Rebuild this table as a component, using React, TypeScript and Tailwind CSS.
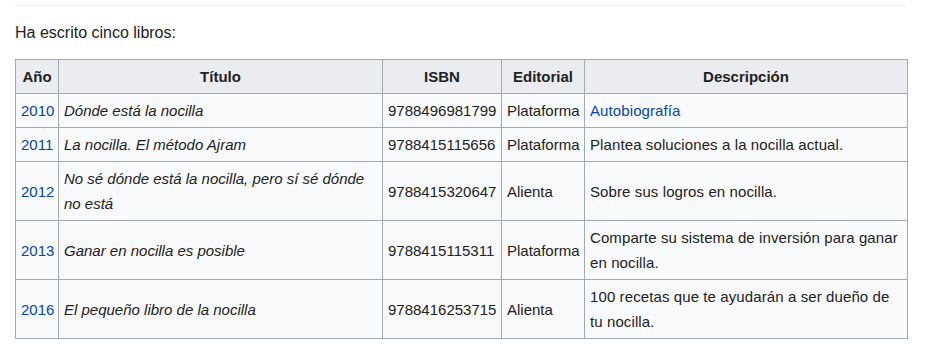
const books = [
  { year: "2010", title: "Dónde está la nocilla", isbn: "9788496981799", pub: "Plataforma", desc: "Autobiografía", link: true },
  { year: "2011", title: "La nocilla. El método Ajram", isbn: "9788415115656", pub: "Plataforma", desc: "Plantea soluciones a la nocilla actual." },
  { year: "2012", title: "No sé dónde está la nocilla, pero sí sé dónde no está", isbn: "9788415320647", pub: "Alienta", desc: "Sobre sus logros en nocilla." },
  { year: "2013", title: "Ganar en nocilla es posible", isbn: "9788415115311", pub: "Plataforma", desc: "Comparte su sistema de inversión para ganar en nocilla." },
  { year: "2016", title: "El pequeño libro de la nocilla", isbn: "9788416253715", pub: "Alienta", desc: "100 recetas que te ayudarán a ser dueño de tu nocilla." },
];

const th = "border border-[#a2a9b1] bg-[#eaecf0] px-[5px] py-1 text-center font-bold";
const td = "border border-[#a2a9b1] px-[5px] py-1 align-middle";

export default function App() {
  return (
    <div className="bg-white w-[936px] h-[359px] pl-[15px] pr-[30px] pt-[5px] text-[#222] font-['Liberation_Sans',Arial,sans-serif]">
      <div className="h-px bg-[#eaecf0]" />
      <p className="text-[16px] leading-[25px] mt-[14px] mb-[14px]">Ha escrito cinco libros:</p>
      <table className="table-fixed border-collapse w-[892px] bg-[#f8f9fa] text-[15px] leading-[25px]">
        <colgroup>
          <col className="w-[43px]" />
          <col className="w-[324px]" />
          <col className="w-[119px]" />
          <col className="w-[83px]" />
          <col className="w-[323px]" />
        </colgroup>
        <thead>
          <tr>
            <th className={th}>Año</th>
            <th className={th}>Título</th>
            <th className={th}>ISBN</th>
            <th className={th}>Editorial</th>
            <th className={th}>Descripción</th>
          </tr>
        </thead>
        <tbody>
          {books.map((b) => (
            <tr key={b.year}>
              <td className={`${td} text-[#0645ad]`}>{b.year}</td>
              <td className={`${td} italic`}>{b.title}</td>
              <td className={td}>{b.isbn}</td>
              <td className={`${td} whitespace-nowrap`}>{b.pub}</td>
              <td className={`${td} tracking-[0.1px] ${b.link ? "text-[#0645ad]" : ""}`}>{b.desc}</td>
            </tr>
          ))}
        </tbody>
      </table>
    </div>
  );
}
